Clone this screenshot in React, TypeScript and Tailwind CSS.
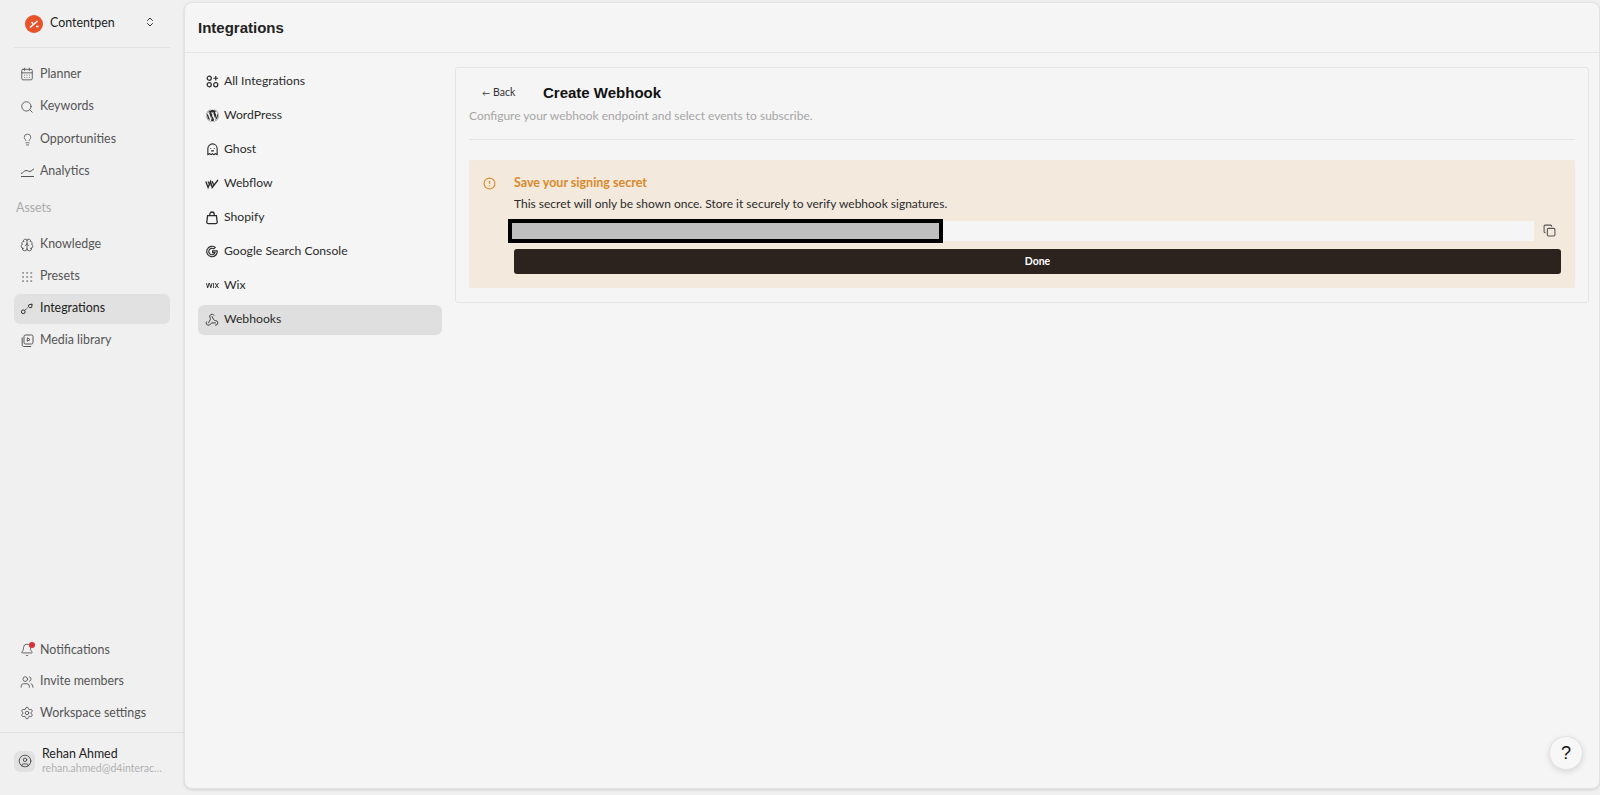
import {
  Bell,
  CalendarDays,
  ChevronsUpDown,
  CircleAlert,
  CircleUser,
  Copy,
  Brain,
  Grip,
  Lightbulb,
  Search,
  Settings,
  Users,
  Webhook,
} from "lucide-react";
import { TbBrandGoogle } from "react-icons/tb";
import { FaWordpress } from "react-icons/fa";
import { SiWix } from "react-icons/si";
import type { ReactNode } from "react";

const font = "font-['Lato',sans-serif]";

function AllIcon() {
  return (
    <svg width="13" height="13" viewBox="0 0 14 14" fill="none" stroke="currentColor" strokeWidth="1.3">
      <circle cx="3.5" cy="3.5" r="2.2" />
      <circle cx="3.5" cy="10.5" r="2.2" />
      <circle cx="10.5" cy="10.5" r="2.2" />
      <path d="M10.5 1v5M8 3.5h5" />
    </svg>
  );
}

function NodesIcon() {
  return (
    <svg width="14" height="14" viewBox="0 0 15 15" fill="none" stroke="currentColor" strokeWidth="1">
      <circle cx="3.5" cy="10.5" r="2" />
      <path d="M9.5 3l3.5-.8-.5 3.6-2 .4-1.5-1.6z" />
      <path d="M5 9l4-3.5" strokeDasharray="1.5 1" />
    </svg>
  );
}

function WebflowIcon() {
  return (
    <svg width="14" height="14" viewBox="0 0 14 14" fill="none" stroke="currentColor" strokeWidth="1.3">
      <path d="M.8 4.5l2.3 6 2.4-6 1.7 6 5.8-7.5" />
      <path d="M3 4.5l2.3 4M7 4l2 4.5" />
    </svg>
  );
}

function GhostIcon() {
  return (
    <svg width="13" height="13" viewBox="0 0 14 14" fill="none" stroke="currentColor" strokeWidth="1.2">
      <path d="M2 12.5V6a5 5 0 0 1 10 0v6.500l-2-1-1.500 1-1.500-1-1.500 1-1.500-1z" />
      <path d="M5 5.500v.8M9 5.500v.8M5.500 8.500h3" />
    </svg>
  );
}

function BagIcon() {
  return (
    <svg width="14" height="14" viewBox="0 0 14 14" fill="none" stroke="currentColor" strokeWidth="1.3">
      <path d="M2.6 4.6h8.8l.8 6.4a1.5 1.5 0 0 1-1.5 1.7H3.3A1.5 1.5 0 0 1 1.8 11z" />
      <path d="M4.8 4.6V3.200a2.200 2.200 0 0 1 4.400 0v1.400" />
    </svg>
  );
}

function AreaIcon() {
  return (
    <svg width="15" height="13" viewBox="0 0 15 13" fill="none" stroke="currentColor" strokeWidth="1">
      <path d="M1 8.500c2-.2 3-2.800 5-3s2.500 1.300 4 1 2.500-2 4-2.500" />
      <path d="M1 11.500h13" />
    </svg>
  );
}

function MediaIcon() {
  return (
    <svg width="14" height="14" viewBox="0 0 14 14" fill="none" stroke="currentColor" strokeWidth="1">
      <rect x="4" y="1" width="9" height="9" rx="1.5" />
      <path d="M2.200 3.500v7.300c0 1 .7 1.700 1.700 1.700h7.300" />
      <path d="M7.300 3.800v3.500l2.800-1.750z" />
    </svg>
  );
}

function SideItem({ icon, label, active }: { icon: ReactNode; label: string; active?: boolean }) {
  return (
    <div
      className={`flex h-[30px] items-center gap-[5px] whitespace-nowrap rounded-md px-[5px] text-[12.4px] ${
        active ? "bg-[#e1e1e1] text-[#222]" : "text-[#555]"
      }`}
    >
      <span className="flex w-[16px] shrink-0 justify-center">{icon}</span>
      {label}
    </div>
  );
}

function SubItem({ icon, label, active }: { icon: ReactNode; label: string; active?: boolean }) {
  return (
    <div
      className={`flex h-[30px] items-center gap-[5px] rounded-md px-[7px] pb-[1px] text-[12.2px] text-[#2b2b2b] ${
        active ? "bg-[#e0dfdf]" : ""
      }`}
    >
      <span className="flex w-[14px] shrink-0 justify-center">{icon}</span>
      {label}
    </div>
  );
}

export default function App() {
  return (
    <div className={`flex h-[795px] w-[1600px] overflow-hidden bg-[#f0f0f0] ${font}`}>
      <aside className="flex w-[184px] shrink-0 flex-col">
        <div className="mx-[14px] flex h-[48px] shrink-0 items-center border-b border-[#e2e2e2] pl-[11px] pr-[14px]">
          <span className="flex h-[18px] w-[18px] items-center justify-center rounded-full bg-[#e8522a]">
            <svg width="12" height="12" viewBox="0 0 12 12" fill="none" stroke="#fff" strokeWidth="1.6">
              <path d="M2 9.500L9.500 3M3.500 4l1.500 1.500M8 8.500h2.500" />
            </svg>
          </span>
          <span className="ml-[7px] text-[12.4px] text-[#222]">Contentpen</span>
          <ChevronsUpDown size={12} className="ml-auto mb-1 text-[#333]" />
        </div>
        <nav className="mt-[11px] flex flex-col gap-[2.6px] px-[14px]">
          <SideItem icon={<CalendarDays size={14} strokeWidth={1.5} />} label="Planner" />
          <SideItem icon={<Search size={14} strokeWidth={1.5} />} label="Keywords" />
          <SideItem icon={<Lightbulb size={13} strokeWidth={1.5} />} label="Opportunities" />
          <SideItem icon={<AreaIcon />} label="Analytics" />
        </nav>
        <div className="ml-[16px] mt-[11px] text-[12.4px] leading-[20px] text-[#ababab]">Assets</div>
        <nav className="mt-[12px] flex flex-col gap-[2px] px-[14px]">
          <SideItem icon={<Brain size={14} strokeWidth={1.5} />} label="Knowledge" />
          <SideItem icon={<Grip size={14} strokeWidth={1.5} className="text-[#8a8a8a]" />} label="Presets" />
          <SideItem icon={<NodesIcon />} label="Integrations" active />
          <SideItem icon={<MediaIcon />} label="Media library" />
        </nav>
        <nav className="mt-auto flex flex-col gap-[1.5px] px-[14px]">
          <div className="relative">
            <SideItem icon={<Bell size={14} strokeWidth={1.5} />} label="Notifications" />
            <span className="absolute left-[15px] top-[7px] h-[6px] w-[6px] rounded-full bg-[#d9303a]" />
          </div>
          <SideItem icon={<Users size={14} strokeWidth={1.5} />} label="Invite members" />
          <SideItem icon={<Settings size={14} strokeWidth={1.5} />} label="Workspace settings" />
        </nav>
        <div className="mt-[4px] flex h-[63px] shrink-0 items-center gap-[7px] border-t border-[#e2e2e2] pb-[6px] pl-[14px]">
          <span className="flex h-[21px] w-[21px] items-center justify-center rounded-md bg-[#e1e1e1] text-[#444]">
            <CircleUser size={14} strokeWidth={1.5} />
          </span>
          <div className="min-w-0">
            <div className="text-[12.4px] leading-[15px] text-[#222]">Rehan Ahmed</div>
            <div className="w-[122px] truncate text-[10.5px] leading-[15px] text-[#b0b0b0]">
              rehan.ahmed@d4interactive.io
            </div>
          </div>
        </div>
      </aside>

      <main className="mb-[6px] mt-[2px] flex min-w-0 flex-1 flex-col rounded-lg border border-[#e3e3e3] bg-[#f5f5f5] shadow-[0_1px_3px_rgba(0,0,0,0.12)]">
        <header className="flex h-[50px] shrink-0 items-center border-b border-[#e5e5e5] px-[13px] pt-[2px]">
          <h1 className="font-['Liberation_Sans',sans-serif] text-[15px] font-bold text-[#222]">Integrations</h1>
        </header>
        <div className="flex flex-1 gap-[13px] pl-[13px] pr-[10px] pt-[14px]">
          <div className="flex w-[244px] shrink-0 flex-col gap-[4px]">
            <SubItem icon={<AllIcon />} label="All Integrations" />
            <SubItem icon={<FaWordpress size={13} />} label="WordPress" />
            <SubItem icon={<GhostIcon />} label="Ghost" />
            <SubItem icon={<WebflowIcon />} label="Webflow" />
            <SubItem icon={<BagIcon />} label="Shopify" />
            <SubItem icon={<TbBrandGoogle size={15} />} label="Google Search Console" />
            <SubItem icon={<SiWix size={13} />} label="Wix" />
            <SubItem icon={<Webhook size={14} strokeWidth={1.5} />} label="Webhooks" active />
          </div>

          <section className="h-[236px] flex-1 rounded-[3px] border border-[#e5e5e5] px-[13px] pt-[14px]">
            <div className="flex items-center">
              <span className="ml-[13px] flex w-[35px] items-center gap-[3px] whitespace-nowrap text-[10.5px] text-[#333]">
                <span className="text-[8px]">←</span>
                Back
              </span>
              <h2 className="ml-[26px] font-['Liberation_Sans',sans-serif] text-[15px] font-bold leading-[22px] text-[#111]">
                Create Webhook
              </h2>
            </div>
            <p className="mt-[2px] border-b border-[#e4e4e4] pb-[13px] text-[12px] leading-[20px] text-[#a6a6a6]">
              Configure your webhook endpoint and select events to subscribe.
            </p>
            <div className="mt-[20px] flex h-[128px] rounded-[2px] bg-[#f3e9dd] pl-[14px] pr-[14px] pt-[14px]">
              <CircleAlert size={13} className="mt-[3px] shrink-0 text-[#d98a2b]" />
              <div className="ml-[18px] min-w-0 flex-1">
                <div className="text-[12.5px] font-bold leading-[18px] text-[#d98a2b]">
                  Save your signing secret
                </div>
                <div className="mt-[3px] text-[12px] leading-[18px] text-[#2b2b2b]">
                  This secret will only be shown once. Store it securely to verify webhook signatures.
                </div>
                <div className="relative mt-[8px] flex items-center gap-[9px]">
                  <div className="h-[20px] flex-1 bg-[#f5f5f5]" />
                  <Copy size={13} className="mr-[5px] -mt-[1px] text-[#555]" />
                  <div className="absolute -top-[2px] -left-[6px] h-[24px] w-[435px] border-[4px] border-black bg-[#bfbfbf]" />
                </div>
                <button className="mt-[8px] h-[25px] w-full rounded-[3px] bg-[#2c221e] text-[10.5px] font-bold text-white">
                  Done
                </button>
              </div>
            </div>
          </section>
        </div>
      </main>

      <button className="absolute left-[1549px] top-[736px] flex h-[34px] w-[34px] items-center justify-center rounded-full border border-[#e2e2e2] bg-[#f7f7f7] font-['Liberation_Sans',sans-serif] text-[18px] text-[#111] shadow-[0_2px_6px_rgba(0,0,0,0.12)]">
        ?
      </button>
    </div>
  );
}
